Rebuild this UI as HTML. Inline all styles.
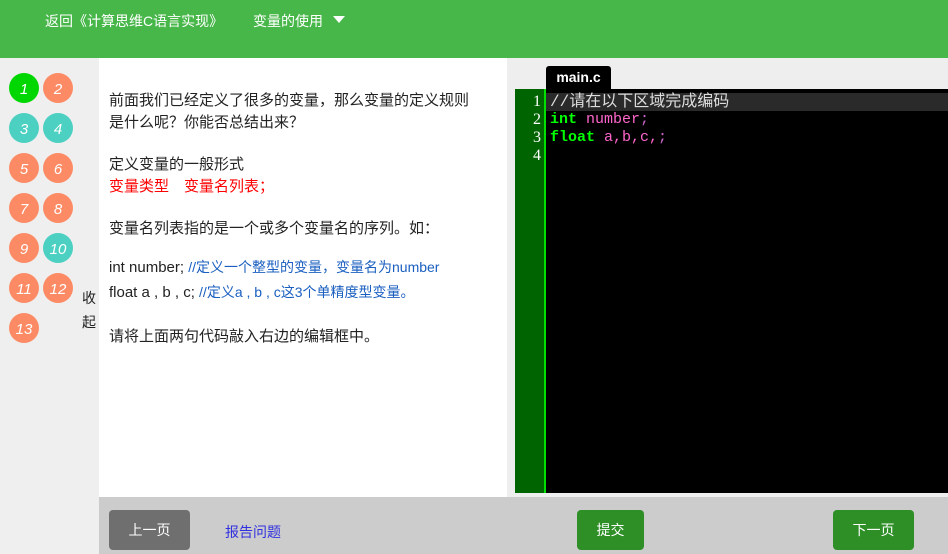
<!DOCTYPE html>
<html><head><meta charset="utf-8"><style>
body{margin:0;width:948px;height:554px;position:relative;overflow:hidden;background:#eee;font-family:"Liberation Sans","Microsoft YaHei","Noto Sans CJK SC",sans-serif}
.hd{position:absolute;left:0;top:0;width:948px;height:58px;background:#48b74a;color:#fff;font-size:14px}
.hd span{position:absolute;top:11px}
.sb{position:absolute;left:0;top:58px;width:99px;height:496px;background:#efefef}
.c{position:absolute;width:30px;height:30px;border-radius:50%;background:#fc8b65;color:#fff;font-style:italic;font-size:15px;text-align:center;line-height:33px}
.t{background:#4cd0c2}.g{background:#00d600}
.ct{position:absolute;left:99px;top:58px;width:408px;height:439px;background:#fff;font-size:15px;color:#222}
.ct p{position:absolute;left:10px;margin:0;line-height:22px}
.ed{position:absolute;left:515px;top:89px;width:433px;height:404px;background:#000}
.gut{position:absolute;left:0;top:0;width:29px;height:404px;background:#006400;border-right:2px solid #00e000;color:#fff;font-family:"Liberation Serif",serif;font-size:16px;text-align:right}
.ln{position:absolute;left:31px;font-family:"Liberation Mono","Noto Sans CJK SC",monospace;font-size:15px;padding-left:4px;height:18px;line-height:18px}
.ft{position:absolute;left:99px;top:497px;width:849px;height:57px;background:#ccc}
.b{position:absolute;top:13px;height:40px;border-radius:4px;color:#fff;font-size:14px;text-align:center;line-height:40px}
</style></head><body>
<div class="hd"><span style="left:45px">返回《计算思维C语言实现》</span><span style="left:253px">变量的使用</span>
<svg style="position:absolute;left:333px;top:16px" width="12" height="8"><path d="M0 0H12L6 7Z" fill="#fff"/></svg></div>
<div class="sb">
<div class="c g" style="left:9px;top:15px">1</div><div class="c" style="left:43px;top:15px">2</div>
<div class="c t" style="left:9px;top:55px">3</div><div class="c t" style="left:43px;top:55px">4</div>
<div class="c" style="left:9px;top:95px">5</div><div class="c" style="left:43px;top:95px">6</div>
<div class="c" style="left:9px;top:135px">7</div><div class="c" style="left:43px;top:135px">8</div>
<div class="c" style="left:9px;top:175px">9</div><div class="c t" style="left:43px;top:175px">10</div>
<div class="c" style="left:9px;top:215px">11</div><div class="c" style="left:43px;top:215px">12</div>
<div class="c" style="left:9px;top:255px">13</div>
<div style="position:absolute;left:82px;top:228px;font-size:14px;line-height:24px;width:14px;color:#222">收<br>起</div>
</div>
<div class="ct">
<p style="top:32px">前面我们已经定义了很多的变量，那么变量的定义规则<br>是什么呢？你能否总结出来？</p>
<p style="top:96px">定义变量的一般形式<br><span style="color:#f00">变量类型　变量名列表；</span></p>
<p style="top:160px">变量名列表指的是一个或多个变量名的序列。如：</p>
<p style="top:197px;line-height:24px">int number; <span style="color:#1a5fc0;font-size:14px">//定义一个整型的变量，变量名为number</span><br>float a , b , c; <span style="color:#1a5fc0;font-size:14px">//定义a , b , c这3个单精度型变量。</span></p>
<p style="top:268px">请将上面两句代码敲入右边的编辑框中。</p>
</div>
<div style="position:absolute;left:546px;top:66px;width:65px;height:23px;background:#000;color:#fff;font-size:14px;font-weight:bold;text-align:center;line-height:23px;border-radius:3px 3px 0 0">main.c</div>
<div class="ed">
<div class="gut"><div style="line-height:18px;padding-right:3px;padding-top:4px">1<br>2<br>3<br>4</div></div>
<div class="ln" style="top:4px;width:398px;background:#2a2a2a;color:#ddd;font-size:16px">//请在以下区域完成编码</div>
<div class="ln" style="top:22px"><b style="color:#0f0">int</b> <span style="color:#f6c">number</span><span style="color:#c6c">;</span></div>
<div class="ln" style="top:40px"><b style="color:#0f0">float</b> <span style="color:#f6c">a,b,c,</span><span style="color:#c6c">;</span></div>
</div>
<div class="ft">
<div class="b" style="left:10px;width:81px;background:#6f6f6f">上一页</div>
<div style="position:absolute;left:126px;top:25px;color:#3030e0;font-size:14px">报告问题</div>
<div class="b" style="left:478px;width:67px;background:#2e8f27">提交</div>
<div class="b" style="left:734px;width:81px;background:#2e8f27">下一页</div>
</div>
</body></html>
